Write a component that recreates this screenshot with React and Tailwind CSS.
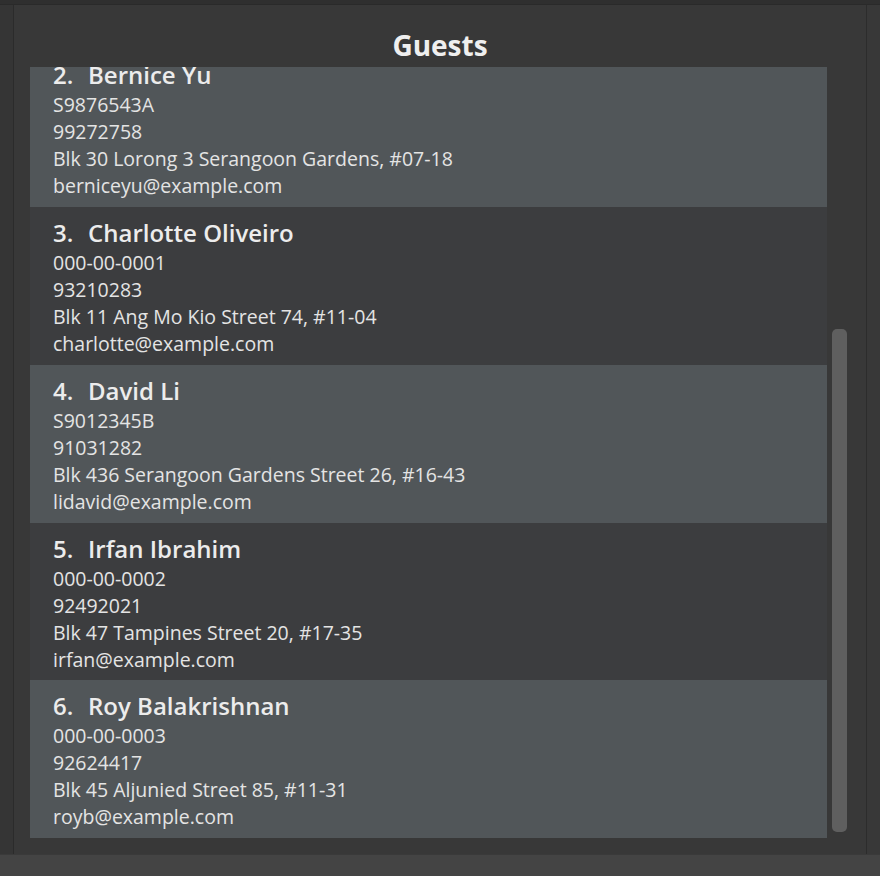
import React from "react";

const guests = [
  { id: 1, name: "Alex Yeoh", ic: "S1234567D", phone: "87438807", addr: "Blk 30 Geylang Street 29, #06-40", email: "alexyeoh@example.com" },
  { id: 2, name: "Bernice Yu", ic: "S9876543A", phone: "99272758", addr: "Blk 30 Lorong 3 Serangoon Gardens, #07-18", email: "berniceyu@example.com" },
  { id: 3, name: "Charlotte Oliveiro", ic: "000-00-0001", phone: "93210283", addr: "Blk 11 Ang Mo Kio Street 74, #11-04", email: "charlotte@example.com" },
  { id: 4, name: "David Li", ic: "S9012345B", phone: "91031282", addr: "Blk 436 Serangoon Gardens Street 26, #16-43", email: "lidavid@example.com" },
  { id: 5, name: "Irfan Ibrahim", ic: "000-00-0002", phone: "92492021", addr: "Blk 47 Tampines Street 20, #17-35", email: "irfan@example.com" },
  { id: 6, name: "Roy Balakrishnan", ic: "000-00-0003", phone: "92624417", addr: "Blk 45 Aljunied Street 85, #11-31", email: "royb@example.com" },
];

function Card({ g }) {
  const light = g.id % 2 === 0;
  const h = g.id === 5 ? "h-[157px]" : "h-[158px]";
  return (
    <div className={(light ? "bg-[#515659]" : "bg-[#3c3d3f]") + " " + h + " pl-[23px] pt-[10px] pb-[8px]"}>
      <div className="flex items-center h-[32px] text-[24px] font-semibold text-[#ececec]">
        <span className="w-[35px]">{g.id}.</span>
        <span>{g.name}</span>
      </div>
      <div className="text-[19.5px] leading-[27px] text-[#e4e4e4]">
        <div>{g.ic}</div>
        <div>{g.phone}</div>
        <div>{g.addr}</div>
        <div>{g.email}</div>
      </div>
    </div>
  );
}

export default function App() {
  return (
    <div className="w-[880px] h-[876px] flex flex-col bg-[#383838] overflow-hidden" style={{ fontFamily: '"Open Sans", "Noto Sans", sans-serif' }}>
      <div className="h-[5px] bg-[#2f2f2f] border-b border-[#2a2a2a]" />
      <div className="flex-1 flex min-h-0">
        <div className="w-[14px] bg-[#353535] border-r border-[#2b2b2b]" />
        <div className="flex-1 flex flex-col min-w-0 bg-[#383838]">
          <div className="pt-[22px] pb-[4px] text-center text-[28px] leading-[36px] font-bold text-[#efefef]">Guests</div>
          <div className="flex-1 flex min-h-0 pl-[16px] pb-[16px]">
            <div className="flex-1 overflow-hidden">
              <div className="mt-[-176px]">
                {guests.map((g) => (
                  <Card key={g.id} g={g} />
                ))}
              </div>
            </div>
            <div className="w-[39px] pl-[5px]">
              <div className="mt-[262px] w-[15px] h-[503px] rounded-[5px] bg-[#5f5f5f]" />
            </div>
          </div>
        </div>
        <div className="w-[14px] bg-[#383838] border-l border-[#2c2c2c]" />
      </div>
      <div className="h-[22px] bg-[#444444] border-t border-[#3a3a3a]" />
    </div>
  );
}
